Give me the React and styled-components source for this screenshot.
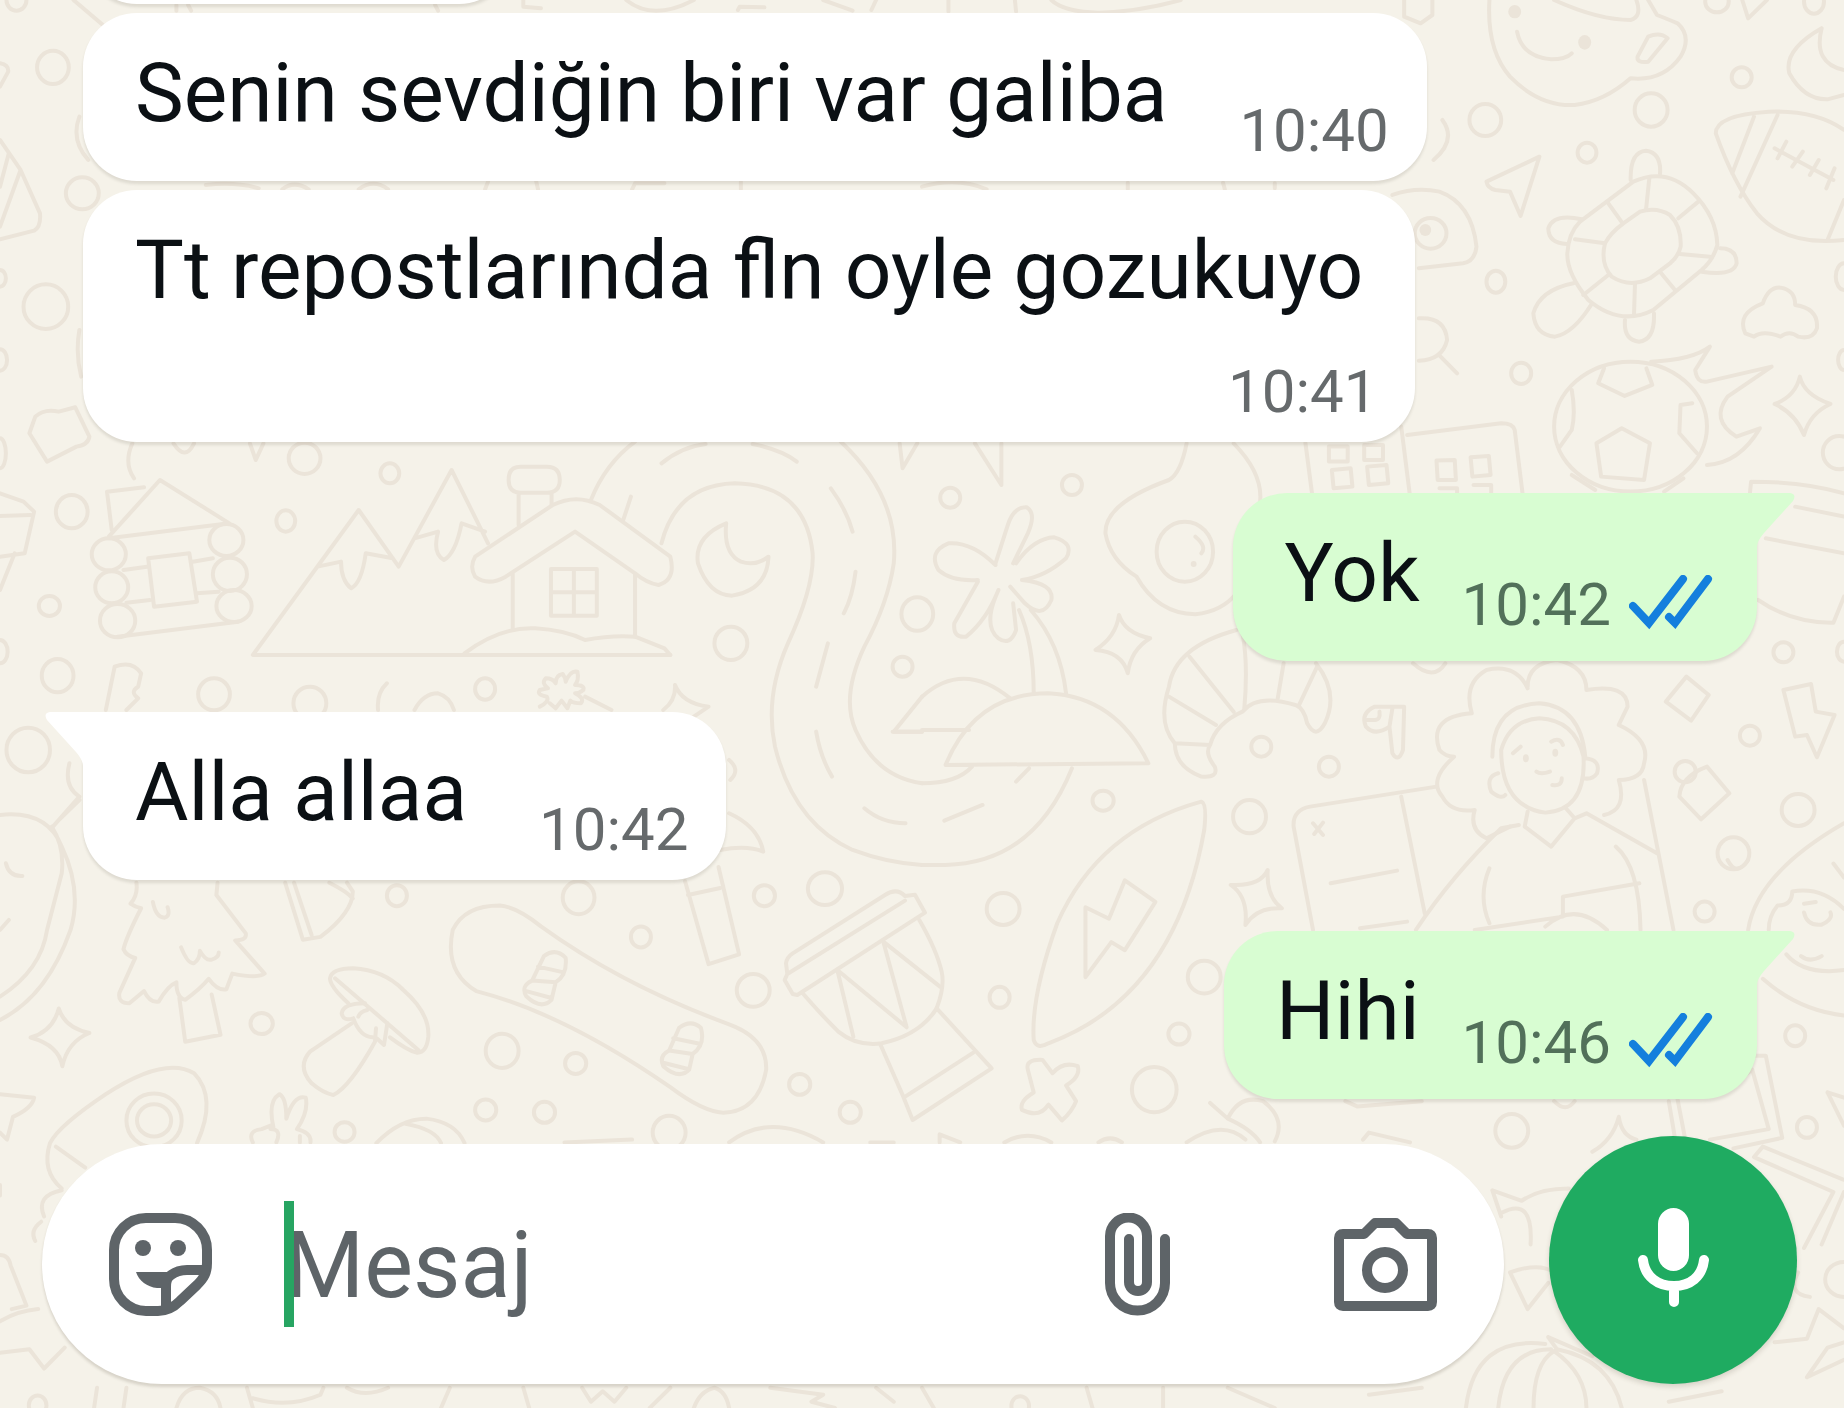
import React from "react";
import styled, { createGlobalStyle } from "styled-components";

const GlobalStyle = createGlobalStyle`
  * { box-sizing: border-box; }
  body { margin: 0; background: #f5f2e9; font-family: Roboto, "Noto Sans", sans-serif; }
`;

const Screen = styled.div`
  position: relative;
  display: flex;
  flex-direction: column;
  height: 100vh;
  overflow: hidden;
  background: #f5f2e9;
`;

const WallpaperArt = styled.svg`
  position: absolute;
  inset: 0;
  width: 100%;
  height: 100%;
  fill: none;
  stroke: #ebe4d9;
  stroke-width: 4px;
  stroke-linecap: round;
  stroke-linejoin: round;

  path, ellipse { vector-effect: non-scaling-stroke; }
  .solid { fill: #ebe4d9; stroke: none; }
`;

const Messages = styled.main`
  position: relative;
  flex: 1;
  display: flex;
  flex-direction: column;
  justify-content: flex-end;
  min-height: 0;
  padding: 0 87px 37px 83px;
`;

const Bubble = styled.article`
  position: relative;
  flex: none;
  display: flex;
  flex-direction: ${(p) => (p.$stacked ? "column" : "row")};
  align-items: flex-end;
  gap: ${(p) => (p.$stacked ? "38px" : p.$mine ? "42px" : "72px")};
  align-self: ${(p) => (p.$mine ? "flex-end" : "flex-start")};
  min-width: ${(p) => (p.$blank ? "430px" : "0")};
  min-height: 168px;
  margin-top: ${(p) => (p.$first ? "51px" : "9px")};
  padding: 32px 38px 14px 52px;
  border-radius: 54px;
  border-top-left-radius: ${(p) => (p.$first && !p.$mine ? "0" : "54px")};
  border-top-right-radius: ${(p) => (p.$first && p.$mine ? "0" : "54px")};
  background: ${(p) => (p.$mine ? "#d8fdd2" : "#ffffff")};
  box-shadow: 0 3px 3px rgba(60, 50, 30, 0.12);
`;

const Tail = styled.svg`
  position: absolute;
  top: 0;
  ${(p) => (p.$mine ? "left: 100%; margin-left: -1px;" : "right: 100%; margin-right: -1px; transform: scaleX(-1);")}
  width: 39px;
  height: 54px;
  fill: ${(p) => (p.$mine ? "#d8fdd2" : "#ffffff")};
`;

const Words = styled.p`
  align-self: flex-start;
  margin: 0;
  padding-right: ${(p) => (p.$stacked ? "14px" : "0")};
  color: #0b1014;
  font-size: 82px;
  line-height: 96px;
  white-space: nowrap;
`;

const Meta = styled.div`
  display: flex;
  align-items: center;
  gap: 18px;
  padding: ${(p) => (p.$mine ? "0 6px 6px 0" : "0")};
`;

const Time = styled.time`
  color: ${(p) => (p.$mine ? "#52705a" : "#666a6c")};
  font-size: 60px;
  line-height: 72px;
`;

const Ticks = styled.svg`
  width: 84px;
  height: 60px;
  fill: none;
  stroke: #147fdd;
  stroke-width: 8px;
  stroke-linecap: round;
`;

const Composer = styled.form`
  position: relative;
  flex: none;
  display: flex;
  align-items: flex-end;
  gap: 45px;
  padding: 0 47px 24px 42px;
`;

const Field = styled.div`
  flex: 1;
  display: flex;
  align-items: center;
  min-width: 0;
  height: 240px;
  padding: 0 67px;
  border-radius: 120px;
  background: #ffffff;
  box-shadow: 0 3px 3px rgba(60, 50, 30, 0.16);
`;

const IconButton = styled.button`
  flex: none;
  display: flex;
  padding: 0;
  border: 0;
  background: none;
  color: #5e6468;
  margin-left: ${(p) => (p.$spaced ? "164px" : "0")};
`;

const Glyph = styled.svg`
  display: block;
  fill: none;
  stroke: currentColor;
  stroke-width: 10px;
  stroke-linecap: round;
  stroke-linejoin: round;

  .solid { fill: currentColor; stroke: none; }
`;

const Entry = styled.label`
  position: relative;
  flex: 1;
  display: flex;
  min-width: 0;
  margin: 0 40px 0 72px;
`;

const TextInput = styled.input`
  width: 100%;
  height: 126px;
  padding: 2px 0 0;
  border: 0;
  outline: 0;
  background: transparent;
  color: #0b1014;
  caret-color: #27a562;
  font-family: inherit;
  font-size: 92px;
  line-height: 124px;

  &::placeholder { color: #5e6468; opacity: 1; }
`;

const Caret = styled.span`
  position: absolute;
  top: 0;
  left: 0;
  width: 10px;
  height: 126px;
  background: #27a562;
`;

const MicButton = styled.button`
  flex: none;
  display: flex;
  align-items: center;
  justify-content: center;
  width: 248px;
  height: 248px;
  padding: 0 0 6px;
  border: 0;
  border-radius: 50%;
  background: #1fab61;
  color: #ffffff;
  box-shadow: 0 3px 5px rgba(60, 50, 30, 0.16);
`;

/* Each sheet of doodles: its place on the wallpaper, its ovals [cx, cy, rx, ry] and its lines. */
const SHEETS = [
  {
    place: "translate(0 0) scale(.588 .3333)",
    ovals: [[90, 202, 27, 50], [140, 580, 28, 48], [78, 920, 38, 67], [0, 835, 10, 25], [0, 1080, 12, 32], [28, 0, 17, 32], [0, 1360, 10, 45]],
    lines: [
      "M0 420L35 510L68 640Q70 680 58 692L0 718M35 510L0 680M15 460L0 560M0 190Q15 195 14 215L0 260",
      "M60 1250Q75 1225 100 1235L128 1222L152 1310Q150 1335 130 1340L80 1385L50 1300Z",
      "M125 0L175 75M135 350Q120 420 150 480M135 990Q128 1060 138 1130",
      "M890 0L890 20L920 25M1065 0Q1110 65 1180 0M1255 30L1258 20L1300 22M1400 0L1450 32M1490 0L1482 30",
      "M300 15L300 32M320 15L325 32M740 15L745 32M480 568Q500 540 525 568M610 568Q635 535 660 568M350 555Q400 545 440 565M830 545L825 568M912 545L915 568M1075 568L1080 550L1130 550M1260 545L1260 568",
    ],
  },
  {
    place: "translate(922 0) scale(.588 .3333)",
    ovals: [[958, 360, 27, 48], [1240, 330, 28, 50], [1394, 232, 17, 30], [1131, 458, 16, 30], [976, 845, 16, 33], [1019, 1120, 17, 32], [1568, 830, 14, 40], [1568, 1080, 10, 30], [1560, 1358, 28, 50], [865, 700, 27, 46], [1205, 1280, 130, 195], [1352, 5, 20, 32], [1517, 5, 17, 36]],
    dots: [[1008, 35, 11, 20], [1127, 127, 11, 22], [856, 690, 10, 18]],
    lines: [
      "M965 0Q960 150 1000 230Q1050 320 1110 315Q1160 305 1205 235Q1260 245 1290 170Q1310 110 1285 70Q1265 55 1250 45L1235 0M1075 0Q1150 60 1205 60Q1225 50 1215 0",
      "M1235 110Q1255 95 1268 115L1235 185Q1215 190 1217 170ZM1012 95Q1020 170 1070 178Q1095 178 1105 160",
      "M1530 85Q1465 150 1475 220Q1500 300 1540 298L1568 285M1530 85Q1515 190 1568 210M1395 0L1405 55L1437 0",
      "M1050 470L960 545Q962 565 975 570L1000 575L1018 648Z",
      "M1568 390Q1520 330 1440 335Q1350 345 1350 400Q1380 550 1420 640Q1470 740 1568 720M1415 350L1378 520M1455 345L1392 590M1568 600L1540 720M1450 445L1550 540M1470 425L1455 475M1498 455L1480 500M1525 480L1510 525M1552 505L1538 565",
      "M1400 1000Q1385 940 1430 910Q1440 860 1460 863Q1485 870 1485 915Q1525 925 1522 985Q1515 1020 1490 1010Q1475 990 1460 1010Q1430 990 1415 1010Z",
      "M1160 1105L1150 1150L1195 1188L1242 1155L1232 1105M1190 1285L1238 1330L1228 1440L1155 1430L1147 1330ZM1105 1170Q1112 1240 1105 1290L1085 1340M1310 1210L1290 1215L1288 1300L1318 1360M1105 1425L1145 1470M1295 1435L1262 1475",
      "M1240 1085Q1310 1080 1340 1040L1315 1110Q1318 1150 1335 1145L1445 1100L1370 1190Q1340 1260 1385 1310L1425 1285Q1390 1390 1335 1395",
      "M1493 1130Q1500 1185 1545 1212Q1510 1240 1500 1305Q1485 1240 1450 1212Q1485 1190 1493 1130Z",
      "M800 585Q840 560 880 575Q935 610 943 740Q940 785 920 790L845 805M845 955Q890 950 893 1020Q885 1080 845 1082M882 1070L910 1120M885 360Q910 420 870 480",
      "M825 1305L985 1270Q1005 1270 1008 1290L1022 1490M652 1328L664 1490M815 1280L830 1490",
      "M692 1340H724V1385H692ZM752 1335H784V1380H752ZM697 1410L729 1405L732 1460L700 1465ZM757 1400L790 1395L793 1450L760 1455ZM875 1382L906 1380L908 1440L877 1440ZM933 1372L964 1368L967 1425L936 1430ZM880 1465H910V1490M938 1455H968V1490",
      "M820 0L820 50L848 70L868 45L868 0M220 0Q240 35 300 38Q370 35 440 0M45 0L45 35M158 0L160 35M0 560Q60 530 110 568M350 548L350 568M512 548L515 568M600 550V565",
    ],
  },
  {
    place: "translate(0 430) scale(.588 .3333)",
    ovals: [[518, 85, 27, 47], [663, 130, 16, 30], [486, 273, 16, 32], [122, 245, 27, 50], [84, 528, 18, 30], [98, 737, 27, 50], [364, 793, 27, 48], [527, 820, 28, 50], [825, 777, 17, 32], [1243, 640, 28, 50], [48, 960, 37, 67], [1535, 710, 17, 30], [0, 665, 13, 35], [185, 373, 29, 48], [190, 472, 28, 48], [200, 572, 30, 50], [385, 330, 29, 48], [391, 433, 29, 50], [398, 528, 30, 48]],
    lines: [
      "M225 40Q210 100 228 145M295 40Q315 95 330 40M425 40L435 90L448 40",
      "M185 320L272 150L390 280L185 325M245 172L182 185L190 300M210 420L250 410M215 518L255 510M200 620L405 575M328 395L362 385M335 490L372 485M252 385L322 370L335 515L262 530Z",
      "M0 190L40 215L58 245L42 370L0 380M0 258L52 255M25 370L0 480",
      "M830 340L768 120L678 410L610 240L430 675H1140M540 410L580 395Q580 450 597 475Q615 460 622 370L668 385M705 325L745 305Q735 370 755 390Q775 370 785 280L825 305",
      "M865 150Q865 110 885 110H930Q952 110 952 150Q952 188 930 188H885Q865 188 865 150ZM882 190V285M938 190V225",
      "M808 380L940 225Q980 190 1020 225L1140 380Q1150 450 1120 465Q1100 460 1080 430L978 305L860 440Q830 470 808 440Q798 410 808 380ZM872 430V600M1080 430V620M937 417H1015V557H937ZM976 417V557M937 487H1015",
      "M790 670Q850 590 910 595Q960 600 995 630Q1040 615 1080 620L1130 655L1140 675",
      "M1235 280Q1180 320 1187 400Q1205 495 1245 497Q1305 480 1307 380Q1285 410 1260 395Q1230 370 1235 280Z",
      "M1005 210Q1030 100 1080 35M1430 35Q1530 200 1520 400Q1510 520 1470 650Q1430 800 1455 900Q1490 1040 1568 1060M1125 340Q1150 165 1250 160Q1370 165 1382 370Q1385 470 1340 640Q1300 800 1318 950Q1350 1180 1450 1260Q1510 1300 1568 1305",
      "M1125 100Q1160 50 1200 42M1280 42Q1330 60 1355 95M1060 270L1073 200M1413 175Q1440 240 1450 305M1455 425Q1450 500 1435 550M1408 640L1388 770M1388 905Q1395 980 1415 1040M1470 1135Q1500 1180 1540 1180M1530 40L1535 115L1560 40",
      "M180 840L195 710Q225 690 240 730L235 770Q220 785 235 805L215 840M658 760Q640 790 643 840M705 840Q720 790 745 790Q765 800 772 840",
      "M918 830Q935 815 930 800Q912 795 918 780Q930 775 932 775Q920 760 928 745Q940 745 945 760Q945 735 957 732Q962 745 962 755Q970 720 982 725Q985 750 978 765Q995 765 992 780Q985 790 978 790Q995 805 988 820Q975 820 970 812L965 835L955 812L945 835L935 820M995 800L1040 840",
      "M1148 765Q1160 820 1205 830L1180 860M1148 765Q1150 810 1128 840M1240 990Q1260 1020 1242 1050",
      "M1240 1150Q1290 1190 1298 1265Q1270 1245 1225 1260M118 1000Q108 1070 135 1100L90 1190M135 1110L100 1170M0 1155Q80 1140 105 1250Q140 1380 120 1500Q80 1700 0 1770M88 1190Q110 1250 105 1330L80 1500Q70 1620 0 1700M10 1300Q15 1340 38 1338M0 1500L15 1470",
      "M1520 905L1568 905M1520 905L1568 800",
    ],
  },
  {
    place: "translate(922 430) scale(.588 .3333)",
    ovals: [[48, 203, 17, 30], [255, 165, 17, 30], [1465, 667, 17, 30], [577, 950, 17, 30], [692, 1010, 17, 30], [1408, 917, 17, 30], [308, 1112, 18, 30], [557, 1160, 28, 50], [1490, 1140, 28, 48], [1380, 1270, 27, 48], [1331, 1445, 17, 30], [138, 1437, 28, 48], [-8, 552, 27, 50], [1568, 665, 12, 30], [447, 365, 48, 90], [1298, 1025, 18, 32]],
    dots: [[1027, 985, 5, 12], [1077, 968, 5, 12], [462, 402, 5, 9]],
    lines: [
      "M90 40L135 165L135 40M450 40Q440 130 420 150Q310 220 312 310Q320 390 365 440Q400 550 465 553Q510 545 535 490M530 40Q580 130 575 215M465 320Q485 350 475 370",
      "M125 400L145 290Q155 230 178 232Q195 250 180 310L155 400M125 405Q85 335 45 340Q10 365 28 420Q50 455 95 450M160 400Q190 325 225 322Q260 340 245 385Q210 440 170 450M95 455L55 580Q52 625 75 620Q110 570 130 480M170 450Q225 460 220 510Q205 570 175 520L150 470M125 500Q105 590 130 625Q150 650 160 600L155 520M165 540Q190 640 190 790M185 540Q235 640 245 790",
      "M40 1005Q90 790 215 790Q330 800 385 1000ZM0 900H80M-50 905H0M0 800Q70 690 150 805M0 1060Q60 1060 85 1010M255 1015Q190 1300 40 1305H0M182 1015L160 1055M38 1172L103 1125",
      "M335 555Q345 610 388 625Q355 660 350 730Q340 665 295 660Q330 620 335 555ZM588 1320Q585 1400 612 1435Q570 1430 550 1485Q555 1400 525 1365Q575 1370 588 1320Z",
      "M535 600Q430 650 420 770Q400 880 430 940Q430 1010 475 1040Q505 1045 498 1010Q480 970 490 945Q500 880 545 845Q570 790 635 825Q650 835 655 880Q670 930 685 880Q710 790 670 700M455 680L530 845M420 800L500 885M430 940L490 945M545 610Q555 700 548 840M615 700L605 805M672 710L640 830M835 700Q870 755 890 700",
      "M820 830H770Q745 850 755 890Q770 920 795 890L800 970Q810 1000 818 960ZM795 890L800 835M757 870H770Q780 870 778 845",
      "M1030 775Q1010 700 960 720Q920 760 935 850Q860 860 880 960Q890 980 905 980Q860 1050 885 1100Q900 1150 940 1140Q930 1200 960 1225L1000 1190M1030 770Q1030 700 1080 690Q1130 710 1130 780Q1200 760 1200 830L1185 885Q1240 930 1228 1000Q1225 1050 1185 1050Q1200 1140 1160 1155",
      "M970 980Q970 825 1050 820Q1120 830 1128 980M985 960Q1000 870 1050 865Q1110 870 1125 980Q1130 1140 1060 1148Q985 1130 985 960M1128 985Q1155 990 1148 1030Q1140 1050 1125 1045M980 1030Q958 1040 968 1085Q985 1110 992 1095M1045 1025Q1052 1035 1068 1025M1072 1065Q1088 1070 1088 1045M1005 970L1018 950M1070 935Q1085 920 1090 945",
      "M1030 1145L1025 1190L1070 1250L1110 1165L1095 1135M1015 1185L985 1195Q900 1340 840 1500M1110 1165L1130 1150L1250 1270M1180 1250Q1220 1310 1222 1500M965 1315Q945 1400 965 1480M1228 1050L1278 1500",
      "M875 1070L660 1130Q630 1140 632 1190L665 1500M815 1100L855 1450M695 1360L808 1322M745 1495L825 1475M665 1180L682 1215M682 1178L667 1212M1220 1360L1090 1400V1460L940 1500M1060 1490Q1110 1410 1165 1500",
      "M1300 740L1338 795L1308 872L1265 815ZM1465 780L1512 762L1520 845L1552 855L1522 982L1505 915L1485 920ZM1335 1010L1373 1090L1325 1168L1288 1100Q1290 1040 1335 1010Z",
      "M475 1115Q300 1200 230 1480Q185 1700 190 1830Q195 1860 215 1840Q430 1700 480 1200Q485 1120 475 1115Z",
      "M1408 190L1410 155Q1500 155 1568 190M1485 230L1568 260M1435 325L1568 370M1422 510Q1480 580 1550 578L1568 500M1568 1180Q1420 1330 1405 1500",
    ],
  },
  {
    place: "translate(0 860) scale(.588 .3495)",
    ovals: [[675, 102, 17, 30], [984, 108, 27, 47], [1300, 102, 18, 30], [1403, 82, 29, 47], [1090, 220, 17, 30], [1281, 373, 28, 47], [445, 468, 19, 30], [854, 546, 28, 49], [979, 582, 18, 30], [1360, 642, 18, 30], [826, 715, 18, 30], [926, 722, 18, 30], [1446, 722, 18, 30], [1138, 780, 28, 48], [586, 778, 17, 28], [64, 1560, 15, 28], [262, 745, 47, 77], [262, 745, 29, 46]],
    lines: [
      "M232 65Q235 100 222 125Q230 135 240 138Q215 220 210 255Q215 275 230 280L203 380Q200 410 220 410L245 375Q255 410 270 405Q285 360 300 350Q300 395 315 400Q340 370 355 340Q370 375 385 370L395 325Q440 340 450 325L400 230Q420 230 418 210L368 100L370 65M305 395L315 520L375 500L360 385M260 120Q265 165 280 165Q290 160 285 135M308 250Q320 300 330 295Q340 285 340 260Q350 290 360 285Q372 280 372 265",
      "M485 65L515 228L545 220Q600 150 600 90L590 65M500 65L530 215M560 65Q590 90 600 110",
      "M770 200Q790 130 850 130Q880 135 920 190Q1060 360 1240 470Q1305 510 1303 600Q1290 720 1230 723Q1195 720 1140 650Q960 440 810 375Q755 320 770 200Z",
      "M925 275Q945 250 962 280Q965 330 945 350L938 400Q920 430 895 390Q885 360 905 345ZM915 305L955 320M905 345L945 350M895 375L938 395M1155 480Q1175 455 1192 480Q1200 530 1178 555L1172 600Q1155 630 1128 590Q1120 560 1138 545ZM1145 510L1188 525M1138 545L1178 555M1128 580L1170 598",
      "M1165 60L1205 298L1257 270L1222 20M1170 100L1225 80",
      "M100 425Q110 480 152 495Q115 520 106 590Q100 530 52 508Q90 490 100 425Z",
      "M105 940Q70 890 85 810Q100 760 180 670Q280 560 330 610Q370 680 335 810M95 820L145 880M105 945Q60 960 75 1020M70 1035Q50 1060 60 1090",
      "M0 670L58 680Q55 710 22 735L12 800L0 780M465 765Q455 690 475 670Q487 680 487 740Q500 670 520 680Q525 720 505 770M460 770Q480 770 470 808M430 808Q420 775 445 770L460 760M505 770Q530 780 528 808M510 790V808",
      "M640 810Q680 740 725 740Q775 750 790 810M690 755Q740 770 750 810M960 808L1075 800M1240 808Q1310 720 1400 808M1480 808H1520",
      "M0 1130Q15 1130 18 1160L45 1275L20 1285M0 1410L50 1400L75 1455L110 1395M0 1320Q30 1290 65 1285M0 930V960",
      "M165 1510L160 1568M215 1510L210 1568M300 1568Q310 1510 340 1510Q370 1520 375 1568M420 1510L430 1568M430 1540Q490 1570 545 1530L550 1510M590 1510Q620 1540 660 1510M750 1568L765 1510M890 1510L900 1568M990 1510L1005 1550L1025 1520L1045 1550L1065 1510M1105 1568L1140 1510M1180 1568Q1190 1520 1215 1510Q1235 1520 1240 1568M1310 1510L1400 1530L1380 1550L1420 1568M1490 1510L1520 1550",
    ],
  },
  {
    place: "translate(922 860) scale(.588 .3495)",
    ovals: [[480, 335, 28, 47], [437, 498, 18, 30], [132, 393, 17, 30], [395, 657, 38, 65], [1003, 775, 28, 48], [1485, 503, 17, 30], [1505, 765, 17, 30], [1568, 1200, 32, 50], [167, 1562, 15, 28]],
    lines: [
      "M345 58L397 120L345 258L322 235L278 335L278 135L318 168Z",
      "M180 600Q175 570 205 572L222 610Q240 575 265 590Q270 620 245 645L262 690Q255 720 238 745L215 700Q200 740 170 715Q165 690 190 665Z",
      "M490 695L520 740Q540 670 580 690Q620 740 600 805M520 740Q560 770 575 808M450 808Q510 740 550 800M750 800L760 780L830 808M720 690L740 705L850 690M1075 690Q1095 725 1110 690M140 808Q180 770 220 808M300 808Q320 785 340 808M30 808V785L65 808",
      "M1270 690L1280 790M1285 685L1297 790M1380 640L1412 600L1440 770L1340 800M1412 560H1435L1463 795L1380 825M1568 915L1430 820L1415 850L1550 950L1500 1110M1568 950L1530 1100",
      "M1185 735Q1190 790 1215 800M1185 735Q1175 800 1140 835M1540 665L1568 680M1540 665L1568 760",
      "M985 1020L970 945L1020 975Q1050 940 1100 940M985 1010Q1040 960 1035 1100M1000 1180Q1050 1150 1075 1180M1000 1180L1030 1285L1065 1210",
      "M1060 1385Q940 1360 925 1568M980 1568Q990 1400 1070 1400M1065 1365L1140 1420M1065 1365L1080 1400Q1170 1430 1190 1568M1040 1568Q1040 1440 1075 1405Q1130 1470 1130 1568",
      "M1430 340Q1490 430 1568 445M1440 200Q1440 160 1455 130Q1480 130 1480 90Q1530 75 1568 140M1470 270Q1500 330 1568 315M1500 150Q1505 190 1530 185Q1550 170 1545 150M1495 275Q1510 295 1530 275M1500 125L1520 120M1550 10L1568 50M1370 0Q1385 50 1405 0",
      "M1490 1180Q1470 1240 1510 1250M1450 1380L1505 1370L1525 1285L1568 1340M1505 1480L1540 1395L1568 1380M1505 1480L1568 1430M760 1530L850 1510M1270 1550L1360 1520M280 1510L290 1568M410 1510V1568M520 1510L600 1568M0 1510L20 1568",
    ],
  },
  /* drum */
  {
    place: "translate(760 870) scale(.3333)",
    ovals: [],
    lines: [
      "M82 312L78 280Q80 262 98 250L375 75Q410 52 435 78L465 74L495 128L112 375L98 372L74 330L82 312L435 92M130 372Q180 430 235 485Q290 530 365 520Q480 495 530 415Q555 350 545 305Q530 240 478 150",
      "M232 300L280 500M232 300L440 472L370 215L540 350M362 525L430 680L458 750L695 595L530 415M432 682L640 548",
    ],
  },
  /* turtle */
  {
    place: "translate(1520 140) scale(.3333)",
    ovals: [],
    lines: [
      "M340 125Q440 80 520 160Q590 230 592 315Q580 360 545 390L400 510Q300 560 205 480Q140 400 142 340Q145 280 180 245Z",
      "M310 250L360 215Q410 200 450 225Q485 260 482 320Q475 350 450 370L390 415Q330 445 275 410Q240 370 255 310Q270 280 310 250Z",
      "M332 120Q330 35 378 32Q425 38 420 102M185 238Q100 220 85 265Q85 310 140 312M600 325Q650 325 650 370Q640 410 545 395M315 540Q310 600 357 605Q405 600 402 520M160 430Q60 450 40 520Q45 585 105 590Q160 580 215 492",
      "M388 115L378 210M265 190L308 250M535 185L475 235M165 298L255 310M570 350L480 342M190 465L265 405M465 450L420 395M342 525L345 430",
    ],
  },
  /* mushroom */
  {
    place: "translate(280 950) scale(.3333)",
    ovals: [],
    lines: [
      "M150 85Q155 55 220 55Q310 60 370 120Q450 190 445 260Q440 310 410 308Q380 300 330 262M150 85Q150 110 205 160M165 85L415 300",
      "M255 160Q190 160 185 190Q190 215 220 205M215 220L90 305Q50 350 95 400Q130 430 160 435Q210 410 285 275L288 235M220 205Q240 260 278 262M290 265L312 285L322 220M235 200Q240 185 262 180",
    ],
  },
];

function Wallpaper() {
  return (
    <WallpaperArt viewBox="0 0 1844 1408" preserveAspectRatio="xMidYMid slice" aria-hidden="true">
      {SHEETS.map((sheet) => (
        <g key={sheet.place} transform={sheet.place}>
          {sheet.ovals.map(([cx, cy, rx, ry]) => (
            <ellipse key={`${cx}-${cy}-${rx}`} cx={cx} cy={cy} rx={rx} ry={ry} />
          ))}
          {(sheet.dots || []).map(([cx, cy, rx, ry]) => (
            <ellipse className="solid" key={`${cx}-${cy}`} cx={cx} cy={cy} rx={rx} ry={ry} />
          ))}
          {sheet.lines.map((d) => (
            <path key={d} d={d} />
          ))}
        </g>
      ))}
    </WallpaperArt>
  );
}

const MESSAGES = [
  { text: "Senin sevdiğin biri var galiba", time: "10:40" },
  { text: "Tt repostlarında fln oyle gozukuyo", time: "10:41", stacked: true },
  { text: "Yok", time: "10:42", mine: true, first: true },
  { text: "Alla allaa", time: "10:42", first: true },
  { text: "Hihi", time: "10:46", mine: true, first: true },
];

function Message({ text, time, mine, first, stacked }) {
  return (
    <Bubble $mine={mine} $first={first} $stacked={stacked}>
      {first && (
        <Tail $mine={mine} viewBox="0 0 39 54" aria-hidden="true">
          <path d="M0 0H34Q41 1 37 8L8 40Q1 48 1 54H0Z" />
        </Tail>
      )}
      <Words $stacked={stacked}>{text}</Words>
      <Meta $mine={mine}>
        <Time $mine={mine}>{time}</Time>
        {mine && (
          <Ticks viewBox="0 0 84 60" role="img" aria-label="Okundu">
            <path d="M4 31L20 48L54 4M40 42L46 48L79 4" />
          </Ticks>
        )}
      </Meta>
    </Bubble>
  );
}

export default function App() {
  return (
    <Screen>
      <GlobalStyle />
      <Wallpaper />
      <Messages>
        <Bubble $blank aria-hidden="true" />
        {MESSAGES.map((m) => (
          <Message key={m.text} {...m} />
        ))}
      </Messages>
      <Composer onSubmit={(e) => e.preventDefault()}>
        <Field>
          <IconButton type="button" aria-label="Çıkartma">
            <Glyph width="103" height="103" viewBox="0 0 103 103">
              <path d="M37 5H66A32 32 0 0 1 98 37V50C98 60 95 65 88 72L71 88C64 95 58 98 49 98H37A32 32 0 0 1 5 66V37A32 32 0 0 1 37 5Z" />
              <path d="M96 57H78C70 57 66 59 62 62C58 65 57 68 57 74V96" />
              <path className="solid" d="M27 59H64L58 75H48C38 74 30 68 27 59Z" />
              <circle className="solid" cx="34" cy="35" r="8" />
              <circle className="solid" cx="69" cy="35" r="8" />
            </Glyph>
          </IconButton>
          <Entry>
            <TextInput type="text" placeholder="Mesaj" aria-label="Mesaj" />
            <Caret />
          </Entry>
          <IconButton type="button" aria-label="Ekle">
            <Glyph width="65" height="103" viewBox="0 0 65 103">
              <path d="M60 26V70A27 27 0 0 1 5 70V23A18 18 0 0 1 42 23V69A9 9 0 0 1 24 69V26" />
            </Glyph>
          </IconButton>
          <IconButton type="button" aria-label="Kamera" $spaced>
            <Glyph width="103" height="93" viewBox="0 0 103 93">
              <path d="M9 16H30L41 5H62L73 16H94Q98 16 98 20V84Q98 88 94 88H9Q5 88 5 84V20Q5 16 9 16Z" />
              <circle cx="51" cy="52" r="18" />
            </Glyph>
          </IconButton>
        </Field>
        <MicButton type="button" aria-label="Sesli mesaj">
          <Glyph width="71" height="99" viewBox="0 0 71 99">
            <rect className="solid" x="20" y="0" width="31" height="63" rx="16" />
            <path d="M5 52C7 69 20 78 36 78S64 69 66 52M36 80V94" />
          </Glyph>
        </MicButton>
      </Composer>
    </Screen>
  );
}
